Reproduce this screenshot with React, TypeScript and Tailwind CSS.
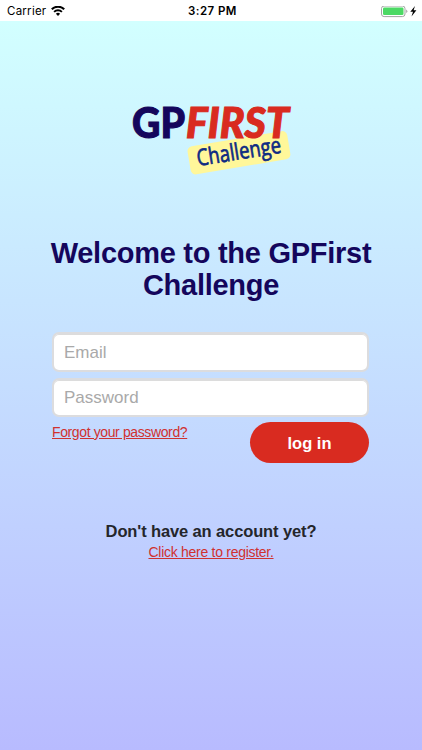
import React from 'react';

const StatusBar: React.FC = () => (
  <header className="grid h-[21px] grid-cols-3 items-center bg-white pl-[7px] pr-[4px] pt-[2px] font-['Inter','Liberation_Sans',sans-serif] text-[11.5px] leading-none text-black">
    <div className="flex items-center gap-[5px]">
      <span className="tracking-[0.25px]">Carrier</span>
      <svg width="14" height="11" viewBox="0 0 14 11" fill="none" stroke="currentColor">
        <path d="M0.8 3.3a8.8 8.8 0 0 1 12.4 0" strokeWidth="2.1" />
        <path d="M3.1 5.9a5.5 5.5 0 0 1 7.8 0" strokeWidth="1.9" />
        <path d="M4.9 7.8a3 3 0 0 1 4.2 0L7 9.9z" fill="currentColor" stroke="none" />
      </svg>
    </div>
    <span className="text-center font-semibold tracking-[0.45px]">3:27 PM</span>
    <div className="flex items-center justify-end">
      <svg width="37" height="12" viewBox="0 0 37 12">
        <rect x="0.5" y="0" width="23.5" height="10.6" rx="2.6" fill="#fff" stroke="#a3a3a3" />
        <rect x="2" y="1.5" width="20.5" height="7.6" rx="1.3" fill="#4cd964" />
        <path d="M25.2 3.5a2 2 0 0 1 0 3.6z" fill="#a3a3a3" />
        <path d="M34 0 29.3 5.8h2.7l-1.5 4.6 4.9-6.2h-2.8z" fill="#000" />
      </svg>
    </div>
  </header>
);

const Logo: React.FC = () => (
  <svg width="184" height="104" viewBox="-10 -15 184 104" role="img" aria-label="GPFirst Challenge">
    <rect x="59.5" y="34.5" width="101" height="28.5" rx="5" fill="#fff79a" transform="rotate(-9.5 110 49)" />
    <text
      x="3"
      y="34"
      textLength="53"
      lengthAdjust="spacingAndGlyphs"
      className="font-['Lato',sans-serif] text-[42px] font-black"
      fill="#14065c"
      stroke="#14065c"
      strokeWidth="1.1"
    >
      GP
    </text>
    <text
      x="57"
      y="34"
      textLength="103"
      lengthAdjust="spacingAndGlyphs"
      className="font-['Lato',sans-serif] text-[42px] font-black italic"
      fill="#d92b20"
      stroke="#d92b20"
      strokeWidth="1.1"
    >
      FIRST
    </text>
    <text
      x="69"
      y="62"
      textLength="85"
      lengthAdjust="spacingAndGlyphs"
      transform="rotate(-9 69 62)"
      className="font-['Open_Sans',sans-serif] text-[23px] font-medium"
      fill="#0d2a83"
      stroke="#0d2a83"
      strokeWidth="0.7"
      strokeLinejoin="round"
    >
      Challenge
    </text>
  </svg>
);

const fields = [
  { name: 'email', type: 'email', placeholder: 'Email' },
  { name: 'password', type: 'password', placeholder: 'Password' }
];

const App: React.FC = () => {
  return (
    <div className="flex h-[750px] w-[422px] flex-col overflow-hidden font-['Liberation_Sans',Arial,sans-serif]">
      <StatusBar />
      <main className="flex flex-1 flex-col items-center bg-gradient-to-b from-[#d2ffff] to-[#b8bbff]">
        <div className="mt-[68px]">
          <Logo />
        </div>

        <h1 className="mt-[44px] text-center text-[29px] font-bold leading-[32px] tracking-[-0.27px] text-[#14065c]">
          Welcome to the GPFirst
          <br />
          Challenge
        </h1>

        <form className="mt-[31px] w-[318px] pr-px" onSubmit={(e) => e.preventDefault()}>
          <div className="flex flex-col gap-[6px]">
            {fields.map((field) => (
              <input
                key={field.name}
                name={field.name}
                type={field.type}
                placeholder={field.placeholder}
                className="h-[39.5px] w-full rounded-[7px] border-2 border-[#dcdcde] bg-white px-[10px] pt-[2px] text-[17px] shadow-[inset_0_1px_0_#dcdcdc] outline-none placeholder:text-[#a9a9a9]"
              />
            ))}
          </div>
          <div className="mt-[5px] flex items-start justify-between">
            <a href="#" className="text-[14px] leading-[20px] tracking-[-0.38px] text-[#d0312f] underline">
              Forgot your password?
            </a>
            <button
              type="submit"
              className="h-[41px] w-[119px] rounded-full bg-[#d92b20] pt-[2px] text-[16.5px] font-bold text-white"
            >
              log in
            </button>
          </div>
        </form>

        <p className="mt-[57px] text-[16.5px] font-bold leading-[22px] tracking-[-0.12px] text-[#24262b]">
          Don't have an account yet?
        </p>
        <a href="#" className="text-[14px] leading-[20px] tracking-[-0.28px] text-[#d0312f] underline">
          Click here to register.
        </a>
      </main>
    </div>
  );
};

export default App;
